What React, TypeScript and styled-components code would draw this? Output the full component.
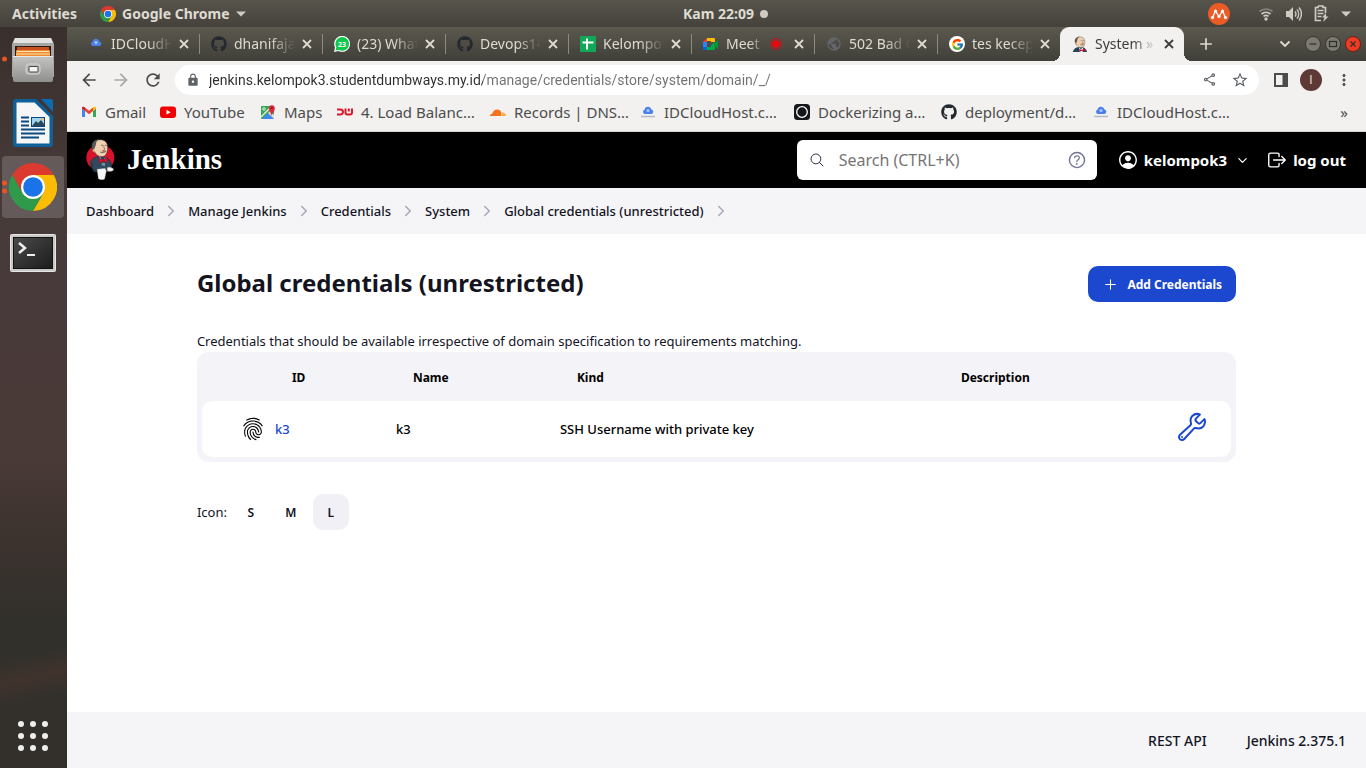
import React from 'react';
import styled, { createGlobalStyle } from 'styled-components';
import {
  IoAddOutline,
  IoBuildOutline,
  IoChevronDownOutline,
  IoChevronForwardOutline,
  IoFingerPrintOutline,
  IoHelpCircleOutline,
  IoLogOutOutline,
  IoPersonCircleOutline,
  IoSearchOutline,
} from 'react-icons/io5';
import {
  MdAdd,
  MdArrowBack,
  MdArrowForward,
  MdLock,
  MdMoreVert,
  MdOutlineShare,
  MdPublic,
  MdRefresh,
  MdStarBorder,
} from 'react-icons/md';
import { FaGithub } from 'react-icons/fa';
import { FcGoogle } from 'react-icons/fc';

const sans = '"Noto Sans", "Open Sans", sans-serif';

const GlobalStyle = createGlobalStyle`
  * { box-sizing: border-box; }
  body { margin: 0; background: #fff; font-family: ${sans}; font-size: 13px; color: #14141f; }
  button, input { font-family: inherit; }
  button { border: 0; padding: 0; background: none; color: inherit; cursor: pointer; }
  a { color: inherit; text-decoration: none; }
  svg { display: block; flex: none; }
`;

/* ---------- Desktop shell ---------- */

const Desktop = styled.div`
  display: flex;
  flex-direction: column;
  min-height: 100vh;
`;

const TopBar = styled.header`
  display: flex;
  align-items: center;
  height: 27px;
  color: #dfdbd2;
  font-size: 14px;
  font-weight: 600;
  background: linear-gradient(#57544c, #44423b);
`;

const TopLeft = styled.div`
  display: flex;
  align-items: center;
  flex: 0 0 50%;
  gap: 23px;
  padding-left: 12px;
`;

const TopButton = styled.button`
  display: flex;
  align-items: center;
  gap: 6px;
  font-size: 14px;
  font-weight: 700;
  line-height: 20px;
  white-space: nowrap;
`;

const ClockDot = styled.span`
  width: 8px;
  height: 8px;
  border-radius: 50%;
  background: #cfcbc3;
`;

const Tray = styled.div`
  display: flex;
  align-items: center;
  gap: 12px;
  margin-left: auto;
  padding-right: 15px;
`;

const TrayApp = styled.span`
  display: flex;
  margin-right: 16px;
`;

const Workspace = styled.div`
  display: flex;
  flex: 1;
`;

const Dock = styled.nav`
  display: flex;
  flex-direction: column;
  align-items: center;
  flex: 0 0 67px;
  gap: 2px;
  padding: 1px 1px 1px 0;
  background:
    linear-gradient(168deg, transparent 84%, rgba(84, 54, 46, 0.4) 87%, transparent 90%),
    linear-gradient(#392f2c 0%, #463a39 20%, #483a3a 38%, #4a3a37 58%, #3d332f 68%, #32302b 80%, #33302c 100%);
`;

const DockItem = styled.button<{ $active?: boolean }>`
  position: relative;
  display: grid;
  place-items: center;
  width: 62px;
  height: 62px;
  border-radius: 4px;
  background: ${(p) => (p.$active ? '#645a5a' : 'transparent')};
`;

const RunDots = styled.span`
  position: absolute;
  left: 0;
  top: 50%;
  display: grid;
  gap: 3px;
  transform: translateY(-50%);
  i { width: 5px; height: 5px; border-radius: 50%; background: #e95420; }
`;

const AppsButton = styled(DockItem)`
  margin-top: auto;
`;

const Browser = styled.section`
  display: flex;
  flex-direction: column;
  flex: 1;
  min-width: 0;
`;

/* ---------- Browser chrome ---------- */

const TabStrip = styled.div`
  display: flex;
  height: 34px;
  padding: 0 5px 0 9px;
  color: #dfdbd2;
  background: linear-gradient(#5b594e, #403f39);
`;

const Tab = styled.div<{ $active?: boolean; $last?: boolean }>`
  position: relative;
  display: flex;
  align-items: center;
  flex: 0 1 ${(p) => (p.$active ? 124 : 123)}px;
  min-width: 0;
  padding: 0 8px 0 12px;
  border-radius: 9px 9px 0 0;
  background: ${(p) => (p.$active ? '#f2f1f0' : 'transparent')};
  color: ${(p) => (p.$active ? '#3c3c3c' : '#dfdbd2')};
  &::before {
    content: '';
    position: absolute;
    display: ${(p) => (p.$active ? 'block' : 'none')};
    inset: auto -8px 0 -8px;
    height: 8px;
    background:
      radial-gradient(circle at 0 0, transparent 8px, #f2f1f0 8px) left / 8px 8px no-repeat,
      radial-gradient(circle at 100% 0, transparent 8px, #f2f1f0 8px) right / 8px 8px no-repeat;
  }
  &::after {
    content: '';
    position: absolute;
    display: ${(p) => (p.$active || p.$last ? 'none' : 'block')};
    right: -1px;
    top: 7px;
    width: 1px;
    height: 20px;
    background: #8b8980;
  }
`;

const TabTitle = styled.button`
  flex: 1;
  min-width: 0;
  margin: 0 5px 0 7px;
  overflow: hidden;
  font-size: 14px;
  line-height: 20px;
  text-align: left;
  white-space: nowrap;
  mask-image: linear-gradient(90deg, #000 60%, transparent);
`;

const TabBadge = styled.span`
  margin-right: 10px;
`;

const IconButton = styled.button<{ $size?: number }>`
  display: grid;
  place-items: center;
  flex: none;
  width: ${(p) => p.$size ?? 14}px;
  height: ${(p) => p.$size ?? 14}px;
`;

const NewTab = styled(IconButton)`
  align-self: center;
  margin-left: 12px;
`;

const WindowControls = styled.div`
  display: flex;
  align-items: center;
  gap: 4px;
  margin-left: auto;
`;

const TabSearch = styled(IconButton)`
  margin-right: 9px;
`;

const Toolbar = styled.div`
  display: flex;
  align-items: center;
  height: 38px;
  padding: 0 12px;
  gap: 12px;
  background: #f2f1f0;
  color: #4c4c4c;
`;

const Omnibox = styled.label`
  display: flex;
  align-items: center;
  flex: 1;
  height: 30px;
  margin-right: 3px;
  padding: 0 10px 0 11px;
  border-radius: 15px;
  background: #fff;
  color: #5f6368;
`;

const Address = styled.input`
  flex: 1;
  min-width: 0;
  margin: 0 8px 0 9px;
  padding: 0;
  border: 0;
  outline: 0;
  font-family: Roboto, sans-serif;
  font-size: 14px;
  line-height: 20px;
  color: transparent;
  background: linear-gradient(90deg, #2e2e2e 274px, #707070 274px);
  background-clip: text;
  -webkit-background-clip: text;
`;

const OmniActions = styled.span`
  display: flex;
  gap: 14px;
`;

const Avatar = styled.button`
  width: 22px;
  height: 22px;
  border-radius: 50%;
  background: #5d3a36;
  color: #e8dedd;
  font-family: Roboto, sans-serif;
  font-size: 12px;
`;

const Bookmarks = styled.nav`
  display: flex;
  align-items: center;
  height: 33px;
  padding: 0 18px 6px 14px;
  border-bottom: 1px solid #d5d4d2;
  background: #f2f1f0;
  color: #4c4c4c;
  font-size: 15px;
  line-height: 20px;
`;

const Bookmark = styled.a<{ $width: number }>`
  display: flex;
  align-items: center;
  gap: 8px;
  flex: 0 0 ${(p) => p.$width}px;
  white-space: nowrap;
`;

const MoreBookmarks = styled.button`
  margin-left: auto;
  font-size: 15px;
  line-height: 20px;
`;

/* ---------- Jenkins page ---------- */

const PageHeader = styled.header`
  display: flex;
  align-items: center;
  height: 56px;
  padding: 0 20px 0 19px;
  background: #000;
  color: #fff;
`;

const Brand = styled.a`
  display: flex;
  align-items: center;
  gap: 12px;
  padding-bottom: 2px;
  font: 700 29px/36px "Liberation Serif", serif;
`;

const SearchBox = styled.label`
  display: flex;
  align-items: center;
  flex: 0 1 300px;
  min-width: 0;
  height: 40px;
  margin: 0 20px 0 auto;
  padding: 0 9px 0 12px;
  border-radius: 6px;
  background: #fff;
  color: #333344;
`;

const SearchInput = styled.input`
  flex: 1;
  width: 0;
  min-width: 0;
  margin: 0 8px 0 14px;
  padding: 0;
  border: 0;
  outline: 0;
  background: none;
  font-size: 16px;
  line-height: 24px;
  &::placeholder { color: #757575; opacity: 1; }
`;

const HelpLink = styled.a`
  color: #737395;
`;

const HeaderLink = styled.a`
  display: flex;
  align-items: center;
  gap: 5px;
  font-size: 15px;
  font-weight: 700;
  line-height: 24px;
  white-space: nowrap;
`;

const UserMenu = styled.button`
  display: grid;
  place-items: center;
  width: 14px;
  height: 24px;
  margin: 0 17px 0 8px;
`;

const Breadcrumbs = styled.ol`
  display: flex;
  align-items: center;
  gap: 9px;
  height: 46px;
  margin: 0;
  padding: 0 19px;
  list-style: none;
  background: #f5f5f8;
  font-weight: 500;
  font-size: 13px;
  line-height: 20px;
`;

const Crumb = styled.li`
  display: flex;
  align-items: center;
  gap: 9px;
  white-space: nowrap;
  svg { color: #a6a6bc; }
`;

const Main = styled.main`
  flex: 1;
  padding: 32px 10%;
`;

const TitleRow = styled.div`
  display: flex;
  align-items: center;
  justify-content: space-between;
`;

const Title = styled.h1`
  margin: 0;
  padding-bottom: 2px;
  font-size: 24px;
  font-weight: 700;
  line-height: 34px;
`;

const AddButton = styled.a`
  display: flex;
  align-items: center;
  gap: 8px;
  height: 36px;
  padding: 0 14px;
  border-radius: 10px;
  background: #1b48cf;
  color: #fff;
  font-size: 12px;
  font-weight: 700;
`;

const Intro = styled.p`
  margin: 28px 0 0;
  line-height: 22px;
`;

const TableFrame = styled.div`
  padding: 0 5px 5px;
  border-radius: 12px;
  background: #f3f3f8;
`;

const Table = styled.table`
  width: 100%;
  table-layout: fixed;
  border-collapse: separate;
  border-spacing: 0;
  color: #000;
  th {
    height: 49px;
    padding: 2px 0 0 17px;
    font-size: 12px;
    font-weight: 700;
    text-align: left;
  }
  td {
    height: 56px;
    padding: 0;
    background: #fff;
    font-weight: 500;
    white-space: nowrap;
  }
  td:first-child { padding-left: 39px; border-radius: 10px 0 0 10px; }
  td:last-child { border-radius: 0 10px 10px 0; }
`;

const Col = styled.col<{ $width?: number }>`
  width: ${(p) => (p.$width ? `${p.$width}px` : 'auto')};
`;

const IdLink = styled.a`
  color: #1b48cf;
`;

const ConfigureLink = styled.a`
  display: block;
  width: 32px;
  margin: 0 23px 5px auto;
  color: #1b48cf;
`;

const IconSizes = styled.div`
  display: flex;
  align-items: center;
  gap: 4px;
  margin-top: 32px;
`;

const SizesLabel = styled.span`
  width: 32px;
`;

const SizeButton = styled.button<{ $selected?: boolean }>`
  width: 36px;
  height: 36px;
  border-radius: 10px;
  background: ${(p) => (p.$selected ? '#f0f0f6' : 'transparent')};
  font-size: 12px;
  font-weight: 600;
`;

const PageFooter = styled.footer`
  display: flex;
  align-items: center;
  justify-content: flex-end;
  gap: 40px;
  height: 56px;
  padding: 0 20px;
  background: #f5f5f8;
  font-size: 14px;
  font-weight: 500;
`;

/* ---------- Drawings ---------- */

const ChromeLogo = ({ size }: { size: number }) => (
  <svg width={size} height={size} viewBox="0 0 48 48">
    <path fill="#dc3a2e" d="M3.2 12A24 24 0 0 1 44.8 12H24v12L13.6 30z" />
    <path fill="#fbbc05" d="M44.8 12A24 24 0 0 1 24 48l10.4-18L24 24V12z" />
    <path fill="#2f9a4c" d="M24 48A24 24 0 0 1 3.2 12l10.4 18L24 24l10.4 6z" />
    <circle cx="24" cy="24" r="12" fill="#fff" />
    <circle cx="24" cy="24" r="9.8" fill="#1a73e8" />
  </svg>
);

const FilesIcon = () => (
  <svg width="44" height="46" viewBox="0 0 44 46">
    <defs>
      <linearGradient id="cabinet" x1="0" y1="0" x2="0" y2="1">
        <stop offset="0" stopColor="#c4c4c2" />
        <stop offset="1" stopColor="#8f8f8d" />
      </linearGradient>
    </defs>
    <path d="M4 2h36l3 6v33H1V8z" fill="#a6a6a4" />
    <path d="M4 2h36l2 5H2z" fill="#e2e2e0" />
    <path d="M4 10h36v10H4z" fill="#2b1c16" />
    <path d="M6 11h32v4H6z" fill="#c8501f" />
    <path d="M5 14h34v6H5z" fill="#f08a2c" />
    <path d="M6 15.5h32M5 18h34" stroke="#fbe3b5" strokeWidth="1.2" />
    <path d="M2 20h40v24a2 2 0 0 1-2 2H4a2 2 0 0 1-2-2z" fill="url(#cabinet)" />
    <path d="M2 20.500h40" stroke="#e8e8e6" />
    <rect x="15" y="28" width="14" height="10" rx="2.500" fill="#b9b9b7" stroke="#d4d4d2" />
    <rect x="18" y="30.500" width="9" height="5.500" rx=".5" fill="#f4f4f2" stroke="#444" />
  </svg>
);

const WriterIcon = () => (
  <svg width="40" height="48" viewBox="0 0 40 48">
    <path d="M3 0h20l17 17v28a3 3 0 0 1-3 3H3a3 3 0 0 1-3-3V3a3 3 0 0 1 3-3z" fill="#0f5f99" />
    <path d="M28 0h10a2 2 0 0 1 2 2v11z" fill="#0a6cb0" />
    <path d="M3.500 3.500h18L36.500 18v26.500h-33z" fill="#f6f6f6" />
    <path d="M8 18.500h8M8 22.500h8M8 26.500h8M8 30.500h24M8 34.500h24M8 38.500h18" stroke="#0b4a80" strokeWidth="2" />
    <rect x="18.500" y="18.500" width="13" height="9" fill="#9fd3ee" stroke="#0b4a80" />
    <path d="M19 27l4-5 2 2 3-3 3 4v2z" fill="#26495c" />
    <circle cx="29.500" cy="20.500" r="1.300" fill="#f3c23c" />
  </svg>
);

const TerminalIcon = () => (
  <svg width="46" height="42" viewBox="0 0 46 42">
    <defs>
      <linearGradient id="screen" x1="0" y1="0" x2="1" y2="1">
        <stop offset="0" stopColor="#4b4b4a" />
        <stop offset=".5" stopColor="#333" />
        <stop offset="1" stopColor="#1c1c1c" />
      </linearGradient>
    </defs>
    <rect x=".5" y="4.500" width="45" height="37" rx="1" fill="#c9c9c7" stroke="#e6e6e4" />
    <rect x="3.500" y="7.500" width="39" height="31" fill="url(#screen)" stroke="#111" />
    <path d="M9 13l6 5-6 5" fill="none" stroke="#eee" strokeWidth="2.500" />
    <path d="M17 25h8" stroke="#eee" strokeWidth="2" />
  </svg>
);

const AppsGrid = () => (
  <svg width="30" height="30" viewBox="0 0 30 30" fill="#eeeeec">
    {[3, 15, 27].flatMap((y) => [3, 15, 27].map((x) => <circle key={`${x}-${y}`} cx={x} cy={y} r="3" />))}
  </svg>
);

const Caret = () => (
  <svg width="10" height="6" viewBox="0 0 10 6">
    <path d="M0 .5h10l-5 5z" fill="#cfcbc3" />
  </svg>
);

const MendeleyIcon = () => (
  <svg width="22" height="22" viewBox="0 0 22 22">
    <circle cx="11" cy="11" r="11" fill="#ea5b25" />
    <path d="M4.500 14.500L7.500 8l3.500 5.500L14.500 8l3 6.500" fill="none" stroke="#fff" strokeWidth="1.300" />
    {[[4.5, 14.5], [7.5, 8], [11, 13.5], [14.5, 8], [17.5, 14.5]].map(([x, y]) => (
      <circle key={x} cx={x} cy={y} r="1.600" fill="#fff" />
    ))}
  </svg>
);

const WifiIcon = () => (
  <svg width="16" height="14" viewBox="0 0 16 14" fill="none" strokeWidth="1.700">
    <path d="M1.500 4.500a10 10 0 0 1 13 0" stroke="#85827a" />
    <path d="M3.500 7a7 7 0 0 1 9 0" stroke="#cfcbc3" />
    <path d="M5.500 9.300a4 4 0 0 1 5 0" stroke="#cfcbc3" />
    <circle cx="8" cy="12" r="1.700" fill="#cfcbc3" />
  </svg>
);

const VolumeIcon = () => (
  <svg width="16" height="16" viewBox="0 0 16 16" fill="none" stroke="#cfcbc3" strokeWidth="1.400">
    <path d="M0 5h3l4-4v14l-4-4H0z" fill="#cfcbc3" stroke="none" />
    <path d="M9 5.500a4 4 0 0 1 0 5M11 3.500a7 7 0 0 1 0 9M13 1.500a10 10 0 0 1 0 13" />
  </svg>
);

const BatteryIcon = () => (
  <svg width="15" height="17" viewBox="0 0 15 17">
    <path d="M4 1h5v1.500h2.500V8M7 15.500H1.500v-13H4V1" fill="none" stroke="#cfcbc3" strokeWidth="1.700" />
    <path d="M3.500 5.500h6M3.500 8.500h6M3.500 11.500h4" stroke="#cfcbc3" strokeWidth="1.500" />
    <path d="M12 8l-4 4.500h2.500L9 17l5.500-5.500H12z" fill="#cfcbc3" />
  </svg>
);

const CloudIcon = ({ dim }: { dim?: boolean }) => (
  <svg width="16" height="16" viewBox="0 0 16 16">
    <path d="M4.500 10a2.300 2.300 0 0 1 0-4.300 3.600 3.600 0 0 1 7-.2 2.300 2.300 0 0 1 0 4.500z" fill="#4a80ec" />
    <circle cx="8" cy="6.500" r="1.600" fill="#a9c4f8" />
    <path d="M1 12.500h14" stroke={dim ? '#3d4654' : '#9aa3b3'} strokeWidth="1.500" opacity=".7" />
  </svg>
);

const WhatsAppIcon = () => (
  <svg width="16" height="16" viewBox="0 0 16 16">
    <path d="M0 16l1-4.500A8 8 0 1 1 4.500 15z" fill="#fff" />
    <path d="M1.500 14.500l.8-3.200A6.800 6.800 0 1 1 5 13.900z" fill="#0fc94f" />
    <text x="8" y="10.500" fontSize="7" fontWeight="700" fontFamily="Noto Sans, sans-serif" textAnchor="middle" fill="#fff">23</text>
  </svg>
);

const SheetIcon = () => (
  <svg width="16" height="16" viewBox="0 0 16 16">
    <rect width="16" height="16" rx="1" fill="#0fa958" />
    <path d="M7 2.500v11M2.500 6.500h11" stroke="#fff" strokeWidth="2" />
  </svg>
);

const MeetIcon = () => (
  <svg width="16" height="16" viewBox="0 0 16 16">
    <path d="M4 2h7a1 1 0 0 1 1 1v3H8V5H4z" fill="#fbbc04" />
    <path d="M4 2v4H0z" fill="#ea4335" />
    <path d="M0 6h4v5H0z" fill="#2684fc" />
    <path d="M0 11h4v3H1a1 1 0 0 1-1-1z" fill="#0066da" />
    <path d="M4 11h4V9l4-3v7a1 1 0 0 1-1 1H4z" fill="#00ac47" />
    <path d="M11 7.500L15 4v9l-4-3.500z" fill="#00963c" />
  </svg>
);

const RecordingIcon = () => (
  <svg width="12" height="12" viewBox="0 0 12 12">
    <circle cx="6" cy="6" r="5.400" fill="none" stroke="#d90d12" />
    <circle cx="6" cy="6" r="3.800" fill="#e8090f" />
  </svg>
);

const GoogleBadge = styled.span`
  display: grid;
  place-items: center;
  flex: none;
  width: 16px;
  height: 16px;
  border-radius: 50%;
  background: #fff;
`;

const GmailIcon = () => (
  <svg width="16" height="16" viewBox="0 0 16 16">
    <path d="M1 4v9h3V7z" fill="#4285f4" />
    <path d="M15 4v9h-3V7z" fill="#34a853" />
    <path d="M1 4.500L4 7V3.500L2.800 2.800A1.200 1.200 0 0 0 1 3.800z" fill="#c5221f" />
    <path d="M15 4.500L12 7V3.500l1.200-.7A1.200 1.200 0 0 1 15 3.800z" fill="#fbbc04" />
    <path d="M4 3.500l4 3.200 4-3.200V7l-4 3.200L4 7z" fill="#ea4335" />
  </svg>
);

const YouTubeIcon = () => (
  <svg width="16" height="16" viewBox="0 0 16 16">
    <rect y="2.500" width="16" height="11.500" rx="3" fill="#f00000" />
    <path d="M6.500 5.700v5l4.200-2.500z" fill="#fff" />
  </svg>
);

const MapsIcon = () => (
  <svg width="16" height="16" viewBox="0 0 16 16">
    <rect x="1" y="2" width="13" height="13" rx="1" fill="#34a853" />
    <path d="M2 15l6-6 6 6z" fill="#4285f4" />
    <path d="M1 13L12 2" stroke="#e8eaed" strokeWidth="1.500" />
    <path d="M8 9l6 6v-4l-4-4z" fill="#dadce0" />
    <circle cx="4" cy="5" r="1.300" fill="none" stroke="#fff" strokeWidth=".8" />
    <path d="M11.700 12C11.500 9 8.800 7.500 8.800 4.200a3 3 0 0 1 6 0C14.800 7.500 12 9 11.700 12z" fill="#e0283c" />
    <circle cx="11.800" cy="4" r="1.100" fill="#8c1222" />
  </svg>
);

const DumbwaysIcon = () => (
  <svg width="16" height="16" viewBox="0 0 16 16" fill="none" stroke="#e0172b" strokeWidth="2">
    <path d="M0 5.500h3.500a2.500 2.500 0 0 1 0 5H0M8.500 4.500v4a2 2 0 0 0 2 2H13a2 2 0 0 0 2-2v-4M11.800 4.500v3" />
  </svg>
);

const CloudflareIcon = () => (
  <svg width="16" height="16" viewBox="0 0 16 16">
    <path d="M0 12c0-1.500 1-2.200 2.200-2.200C3 7 5 5.500 7.300 5.500S11 7 11.500 9L10.800 12z" fill="#f6701d" />
    <path d="M11 12l1.200-3.500c2-.3 3.600 1 3.800 3.500z" fill="#fbad41" />
  </svg>
);

const DockerizingIcon = () => (
  <svg width="16" height="16" viewBox="0 0 16 16">
    <rect width="16" height="16" rx="3.500" fill="#15171c" />
    <circle cx="8" cy="8" r="5.300" fill="none" stroke="#fff" strokeWidth="1.300" />
  </svg>
);

const SidePanelIcon = () => (
  <svg width="14" height="14" viewBox="0 0 14 14">
    <path d="M0 0h14v14H0zM2 2v10h6.500V2z" fillRule="evenodd" fill="#4c4c4c" />
  </svg>
);

const CloseIcon = () => (
  <svg width="14" height="14" viewBox="0 0 14 14" fill="none" stroke="currentColor" strokeWidth="1.800">
    <path d="M3 3l8 8M11 3l-8 8" />
  </svg>
);

const ChevronIcon = () => (
  <svg width="12" height="8" viewBox="0 0 12 8" fill="none" stroke="#dfdbd2" strokeWidth="1.800">
    <path d="M1.500 1.500L6 6l4.500-4.500" />
  </svg>
);

const WindowIcon = ({ kind }: { kind: 'min' | 'max' | 'close' }) => (
  <svg width="16" height="16" viewBox="0 0 16 16" fill="none" stroke="#2f2e2a" strokeWidth="1.200">
    <circle cx="8" cy="8" r="7.500" fill={kind === 'close' ? '#ee3b24' : '#7c7a72'} stroke={kind === 'close' ? '#6e2015' : '#383732'} strokeWidth="1" />
    {kind === 'min' && <path d="M4.500 8h7" />}
    {kind === 'max' && <rect x="4.500" y="5.500" width="7" height="5" />}
    {kind === 'close' && <path d="M5.500 5.500l5 5M10.500 5.500l-5 5" />}
  </svg>
);

const ButlerHead = () => (
  <>
    <path d="M79 34c-3-13 7-24 22-24 14 0 23 8 23 23 0 16-5 27-16 28-13 1-23-9-29-27z" fill="#efd0b0" stroke="#2b2320" strokeWidth="1.500" />
    <path d="M77 34c-3-14 7-25 21-25-7 4-8 8-9 13-1 7-3 9-5 16-5 2-6 0-7-4z" fill="#5b5653" />
    <path d="M104 28c3-2 6-2 8 0M115 28c3-2 5-1 7 1M111 31c4 5 5 8 1 10M101 47c7 3 13 2 18-2" fill="none" stroke="#4a352b" strokeWidth="2" />
    <path d="M105 44c6-3 11-3 15 0-5 3-10 3-15 0z" fill="#8a5a4a" />
    <path d="M82 38c-4-1-5 6-1 9l5 2" fill="#e2b793" stroke="#4a352b" strokeWidth="1" />
  </>
);

const JenkinsLogo = () => (
  <svg width="29" height="41" viewBox="59 8 87 123">
    <ellipse cx="102" cy="64" rx="42" ry="39" fill="#d8132b" />
    <path d="M72 76c4-8 12-12 20-15l26 2c8 4 14 10 17 19l2 18-14 6-40 1-7-12z" fill="#2f4a5e" stroke="#16222c" strokeWidth="1.500" />
    <ButlerHead />
    <path d="M99 62l5 5M117 64l-3 3" fill="none" stroke="#dfe5e8" strokeWidth="2.500" />
    <path d="M98 66l12 5 12-7 2 15-12-4-14 5zM109 69h6v6h-6z" fill="#d8132b" stroke="#8a0f1f" />
    <path d="M107 79l9 1v9l-11-2z" fill="#7891a0" />
    <path d="M78 80c-3 10 0 18 8 23l10 2" fill="none" stroke="#16222c" strokeWidth="2" />
    <path d="M92 99l24-3 4 8-5 24c-7 4-14 3-19-1z" fill="#f7f7f7" stroke="#888" />
    <path d="M122 94c7-4 16 0 20 5-1 7-11 8-19 5z" fill="#f4f0ec" stroke="#555" />
  </svg>
);

const JenkinsTabIcon = () => (
  <svg width="16" height="16" viewBox="68 6 66 76">
    <path d="M66 84c4-16 12-22 23-25l26 1c11 4 17 12 20 24z" fill="#20465c" />
    <path d="M95 60l10 8 11-7-3 23h-12z" fill="#eee" />
    <ButlerHead />
    <path d="M97 66l13 6 12-8 3 16-14-4-12 5z" fill="#d8132b" />
  </svg>
);

/* ---------- Data ---------- */

const github = <FaGithub size={16} color="#24292f" />;

const tabs: { title: string; icon: React.ReactNode; badge?: React.ReactNode }[] = [
  { title: 'IDCloudHost', icon: <CloudIcon dim /> },
  { title: 'dhanifajar', icon: github },
  { title: '(23) WhatsApp', icon: <WhatsAppIcon /> },
  { title: 'Devops14', icon: github },
  { title: 'Kelompok', icon: <SheetIcon /> },
  { title: 'Meet', icon: <MeetIcon />, badge: <RecordingIcon /> },
  { title: '502 Bad Gateway', icon: <MdPublic size={16} color="#62656a" /> },
  { title: 'tes kecepatan', icon: <GoogleBadge><FcGoogle size={13} /></GoogleBadge> },
  { title: 'System »', icon: <JenkinsTabIcon /> },
];

const bookmarks: { title: string; width: number; icon: React.ReactNode }[] = [
  { title: 'Gmail', width: 79, icon: <GmailIcon /> },
  { title: 'YouTube', width: 100, icon: <YouTubeIcon /> },
  { title: 'Maps', width: 77, icon: <MapsIcon /> },
  { title: '4. Load Balanc…', width: 153, icon: <DumbwaysIcon /> },
  { title: 'Records | DNS…', width: 150, icon: <CloudflareIcon /> },
  { title: 'IDCloudHost.c…', width: 154, icon: <CloudIcon /> },
  { title: 'Dockerizing a…', width: 147, icon: <DockerizingIcon /> },
  { title: 'deployment/d…', width: 152, icon: github },
  { title: 'IDCloudHost.c…', width: 140, icon: <CloudIcon /> },
];

const crumbs = ['Dashboard', 'Manage Jenkins', 'Credentials', 'System', 'Global credentials (unrestricted)'];

export default function App() {
  return (
    <Desktop>
      <GlobalStyle />
      <TopBar>
        <TopLeft>
          <TopButton>Activities</TopButton>
          <TopButton>
            <ChromeLogo size={16} />
            Google Chrome
            <Caret />
          </TopButton>
        </TopLeft>
        <TopButton>
          Kam 22:09
          <ClockDot />
        </TopButton>
        <Tray>
          <TrayApp><MendeleyIcon /></TrayApp>
          <WifiIcon />
          <VolumeIcon />
          <BatteryIcon />
          <Caret />
        </Tray>
      </TopBar>

      <Workspace>
        <Dock aria-label="Dock">
          <DockItem aria-label="Files"><RunDots><i /></RunDots><FilesIcon /></DockItem>
          <DockItem aria-label="LibreOffice Writer"><WriterIcon /></DockItem>
          <DockItem $active aria-label="Google Chrome"><RunDots><i /><i /></RunDots><ChromeLogo size={48} /></DockItem>
          <DockItem aria-label="Terminal"><TerminalIcon /></DockItem>
          <AppsButton aria-label="Show applications"><AppsGrid /></AppsButton>
        </Dock>

        <Browser>
          <TabStrip>
            {tabs.map((tab, i) => {
              const active = i === tabs.length - 1;
              return (
                <Tab key={tab.title} $active={active} $last={i === tabs.length - 2}>
                  {tab.icon}
                  <TabTitle>{tab.title}</TabTitle>
                  {tab.badge && <TabBadge>{tab.badge}</TabBadge>}
                  <IconButton aria-label="Close tab"><CloseIcon /></IconButton>
                </Tab>
              );
            })}
            <NewTab $size={20} aria-label="New tab"><MdAdd size={20} /></NewTab>
            <WindowControls>
              <TabSearch aria-label="Search tabs"><ChevronIcon /></TabSearch>
              <IconButton $size={16} aria-label="Minimize"><WindowIcon kind="min" /></IconButton>
              <IconButton $size={16} aria-label="Maximize"><WindowIcon kind="max" /></IconButton>
              <IconButton $size={16} aria-label="Close"><WindowIcon kind="close" /></IconButton>
            </WindowControls>
          </TabStrip>

          <Toolbar>
            <IconButton $size={20} aria-label="Back"><MdArrowBack size={20} /></IconButton>
            <IconButton $size={20} aria-label="Forward"><MdArrowForward size={20} color="#a9a8a7" /></IconButton>
            <IconButton $size={20} aria-label="Reload"><MdRefresh size={20} /></IconButton>
            <Omnibox>
              <MdLock size={14} />
              <Address
                aria-label="Address"
                spellCheck={false}
                defaultValue="jenkins.kelompok3.studentdumbways.my.id/manage/credentials/store/system/domain/_/"
              />
              <OmniActions>
                <IconButton $size={16} aria-label="Share"><MdOutlineShare size={15} /></IconButton>
                <IconButton $size={18} aria-label="Bookmark"><MdStarBorder size={18} /></IconButton>
              </OmniActions>
            </Omnibox>
            <IconButton aria-label="Side panel"><SidePanelIcon /></IconButton>
            <Avatar aria-label="Profile">I</Avatar>
            <IconButton $size={20} aria-label="Menu"><MdMoreVert size={18} /></IconButton>
          </Toolbar>

          <Bookmarks aria-label="Bookmarks">
            {bookmarks.map((b, i) => (
              <Bookmark key={i} href="#" $width={b.width}>{b.icon}{b.title}</Bookmark>
            ))}
            <MoreBookmarks aria-label="More bookmarks">»</MoreBookmarks>
          </Bookmarks>

          <PageHeader>
            <Brand href="#"><JenkinsLogo />Jenkins</Brand>
            <SearchBox>
              <IoSearchOutline size={16} />
              <SearchInput type="search" aria-label="Search" placeholder="Search (CTRL+K)" />
              <HelpLink href="#" aria-label="Search help"><IoHelpCircleOutline size={22} /></HelpLink>
            </SearchBox>
            <HeaderLink href="#"><IoPersonCircleOutline size={22} />kelompok3</HeaderLink>
            <UserMenu aria-label="User menu"><IoChevronDownOutline size={13} /></UserMenu>
            <HeaderLink href="#"><IoLogOutOutline size={22} />log out</HeaderLink>
          </PageHeader>

          <Breadcrumbs>
            {crumbs.map((c) => (
              <Crumb key={c}>
                <a href="#">{c}</a>
                <IoChevronForwardOutline size={16} />
              </Crumb>
            ))}
          </Breadcrumbs>

          <Main>
            <TitleRow>
              <Title>Global credentials (unrestricted)</Title>
              <AddButton href="#"><IoAddOutline size={17} />Add Credentials</AddButton>
            </TitleRow>
            <Intro>
              Credentials that should be available irrespective of domain specification to requirements matching.
            </Intro>
            <TableFrame>
              <Table>
                <colgroup>
                  <Col $width={73} />
                  <Col $width={121} />
                  <Col $width={164} />
                  <Col $width={384} />
                  <Col />
                  <Col $width={88} />
                </colgroup>
                <thead>
                  <tr>
                    <th aria-label="Type" />
                    <th>ID</th>
                    <th>Name</th>
                    <th>Kind</th>
                    <th>Description</th>
                    <th aria-label="Actions" />
                  </tr>
                </thead>
                <tbody>
                  <tr>
                    <td><IoFingerPrintOutline size={24} /></td>
                    <td><IdLink href="#">k3</IdLink></td>
                    <td>k3</td>
                    <td>SSH Username with private key</td>
                    <td />
                    <td><ConfigureLink href="#" aria-label="Update"><IoBuildOutline size={32} /></ConfigureLink></td>
                  </tr>
                </tbody>
              </Table>
            </TableFrame>
            <IconSizes>
              <SizesLabel>Icon:</SizesLabel>
              <SizeButton>S</SizeButton>
              <SizeButton>M</SizeButton>
              <SizeButton $selected>L</SizeButton>
            </IconSizes>
          </Main>

          <PageFooter>
            <a href="#">REST API</a>
            <a href="#">Jenkins 2.375.1</a>
          </PageFooter>
        </Browser>
      </Workspace>
    </Desktop>
  );
}
